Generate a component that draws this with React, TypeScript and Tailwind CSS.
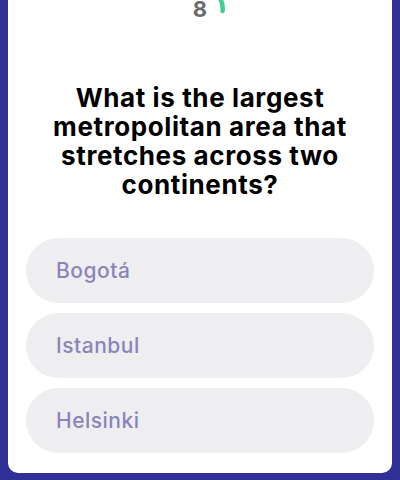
import React from 'react';

const answers = ['Bogotá', 'Istanbul', 'Helsinki'];

function Timer({ value }: { value: number }) {
  return (
    <div className="relative mx-auto -mt-[16px] flex h-[50px] w-[50px] items-center justify-center">
      <svg className="absolute inset-0" width="50" height="50" viewBox="0 0 50 50">
        <path d="M 25 2 A 23 23 0 0 1 47.6 27" fill="none" stroke="#3fcf8e" strokeWidth="4.5" strokeLinecap="round" />
      </svg>
      <span className="text-[22px] font-bold leading-none text-[#6b6b6b]">{value}</span>
    </div>
  );
}

export default function App() {
  return (
    <div className="h-[480px] w-[400px] overflow-hidden bg-[#302f95] px-2 pb-[7px]" style={{ fontFamily: 'Inter, "Open Sans", sans-serif' }}>
      <div className="flex h-full flex-col rounded-b-[10px] bg-white">
        <Timer value={8} />

        {/* Question */}
        <div className="mt-[49px] px-4 text-center text-[26px] font-bold leading-[29px] tracking-[0.6px] text-black">
          What is the largest metropolitan area that stretches across two continents?
        </div>

        {/* Answers */}
        <div className="mt-[39px] flex flex-col gap-[10px] px-[18px]">
          {answers.map((a) => (
            <div
              key={a}
              className="flex h-[65px] items-center rounded-full bg-[#eeeef0] px-[30px] text-[21px] font-medium tracking-[0.5px] text-[#8a85b8]"
            >
              {a}
            </div>
          ))}
        </div>
      </div>
    </div>
  );
}
